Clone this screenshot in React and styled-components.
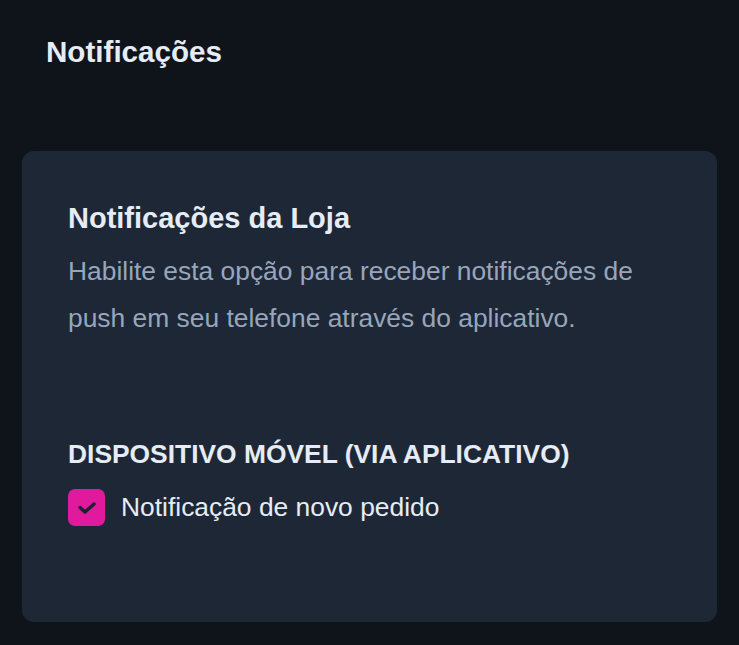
import React from 'react';
import styled, { createGlobalStyle } from 'styled-components';

const GlobalStyle = createGlobalStyle`
  html, body {
    margin: 0;
    padding: 0;
    background: #0f141b;
  }
  body {
    font-family: "Liberation Sans", Arial, sans-serif;
    -webkit-font-smoothing: antialiased;
  }
`;

const Page = styled.div`
  min-height: 645px;
  box-sizing: border-box;
  padding: 34px 22px 24px 22px;
  background: #0f141b;
`;

const PageTitle = styled.h1`
  margin: 0 0 0 24px;
  font-size: 29.6px;
  line-height: 36px;
  font-weight: 700;
  color: #e6ecf5;
`;

const Card = styled.section`
  margin-top: 81px;
  background: #1e2736;
  border-radius: 12px;
  padding: 49px 46px 96px 46px;
`;

const CardTitle = styled.h2`
  margin: 0;
  font-size: 29px;
  line-height: 36px;
  font-weight: 700;
  color: #e6ecf5;
`;

const Description = styled.p`
  margin: 12px 0 0 0;
  font-size: 26.4px;
  line-height: 47px;
  color: #97a6bc;
`;

const SectionLabel = styled.h3`
  margin: 96px 0 0 0;
  font-size: 26.4px;
  line-height: 32px;
  font-weight: 700;
  color: #e6ecf5;
  text-transform: uppercase;
`;

const OptionRow = styled.label`
  display: flex;
  align-items: center;
  gap: 16px;
  margin-top: 19px;
  cursor: pointer;
`;

const Box = styled.span`
  width: 37px;
  height: 37px;
  border-radius: 7px;
  background: ${p => (p.$checked ? '#e0199d' : 'transparent')};
  display: flex;
  align-items: center;
  justify-content: center;
  flex-shrink: 0;
`;

const OptionText = styled.span`
  font-size: 26.4px;
  line-height: 37px;
  color: #e6ecf5;
`;

const Check = () => (
  <svg width="20" height="14" viewBox="0 0 20 14" fill="none">
    <path d="M3 6.5 L8 11 L17 3" stroke="#1a2130" strokeWidth="3.4" strokeLinecap="round" strokeLinejoin="round" />
  </svg>
);

export default function App() {
  return (
    <Page>
      <GlobalStyle />
      <PageTitle>Notificações</PageTitle>
      <Card>
        <CardTitle>Notificações da Loja</CardTitle>
        <Description>
          Habilite esta opção para receber notificações de push em seu telefone através do aplicativo.
        </Description>
        <SectionLabel>Dispositivo móvel (via aplicativo)</SectionLabel>
        <OptionRow>
          <Box $checked>
            <Check />
          </Box>
          <OptionText>Notificação de novo pedido</OptionText>
        </OptionRow>
      </Card>
    </Page>
  );
}
